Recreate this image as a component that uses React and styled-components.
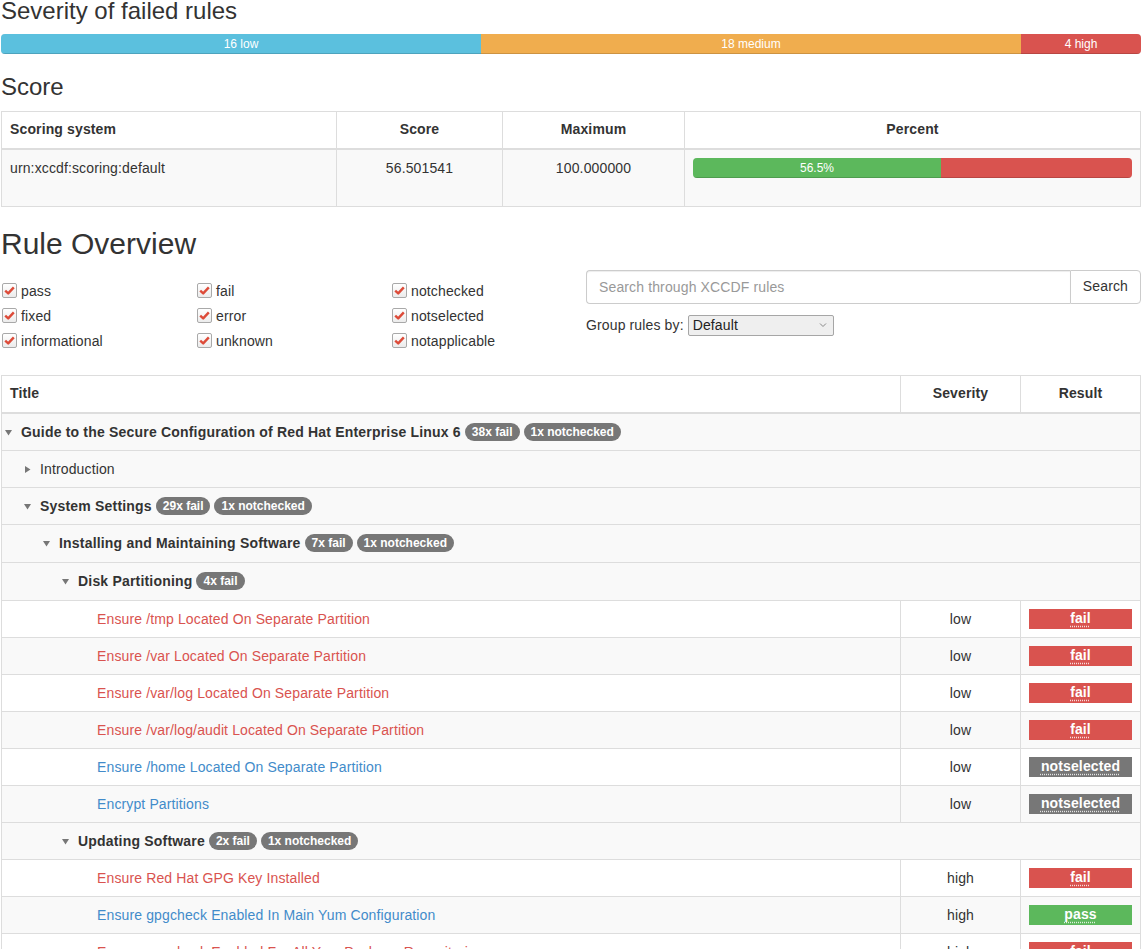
import React from "react";
import styled, { createGlobalStyle } from "styled-components";

const GlobalStyle = createGlobalStyle`
  body {
    margin: 0;
    font-family: "Liberation Sans", Arial, sans-serif;
    font-size: 14px;
    line-height: 1.428571;
    letter-spacing: 0.13px;
    color: #333;
    background: #fff;
  }
`;

const Page = styled.div`
  width: 1140px;
  padding: 0 1px;
`;

const Heading = styled.h3`
  font-size: ${(p) => p.$size}px;
  font-weight: 500;
  line-height: 1.1;
  letter-spacing: 0;
  margin: ${(p) => p.$top}px 0 10px;
`;

const Progress = styled.div`
  display: flex;
  height: 20px;
  margin-bottom: 20px;
  overflow: hidden;
  background: #f5f5f5;
  border-radius: 4px;
  box-shadow: inset 0 1px 2px rgba(0, 0, 0, 0.1);
`;

const Bar = styled.div`
  background: ${(p) => p.$color};
  color: #fff;
  font-size: 12px;
  line-height: 20px;
  letter-spacing: 0;
  text-align: center;
  box-shadow: inset 0 -1px 0 rgba(0, 0, 0, 0.15);
  white-space: nowrap;
`;

const Table = styled.table`
  width: 100%;
  border-collapse: collapse;
  border-spacing: 0;
  border: 1px solid #ddd;
  margin-bottom: 20px;
`;

const Th = styled.th`
  border: 1px solid #ddd;
  border-bottom-width: 2px;
  padding: 7px 8px 9px;
  text-align: ${(p) => p.$align || "left"};
  font-weight: bold;
  line-height: 20px;
  vertical-align: bottom;
`;

const Tr = styled.tr`
  background: ${(p) => (p.$shade ? "#f9f9f9" : "#fff")};
`;

const Td = styled.td`
  border: 1px solid #ddd;
  padding: 8px;
  line-height: 20px;
  vertical-align: top;
  text-align: ${(p) => p.$align || "left"};
`;

const GroupCell = styled(Td)`
  padding-left: ${(p) => 3 + p.$depth * 19}px;
  padding-bottom: ${(p) => 8 + (p.$extra || 0)}px;
  font-weight: ${(p) => (p.$bold ? "bold" : "normal")};
  letter-spacing: ${(p) => (p.$bold ? 0.19 : 0.13)}px;
`;

const RuleCell = styled(Td)`
  padding-left: ${(p) => 19 + p.$depth * 19}px;
`;

const RuleLink = styled.a`
  color: ${(p) => (p.$failed ? "#d9534f" : "#428bca")};
  text-decoration: none;
`;

const ToggleIcon = styled.svg`
  display: inline-block;
  width: 7px;
  height: 7px;
  margin-right: 9px;
  vertical-align: 1px;
  fill: #777;
`;

const Badge = styled.span`
  display: inline-block;
  margin-left: 4px;
  padding: 3px 7px;
  font-size: 12px;
  font-weight: bold;
  line-height: 1;
  letter-spacing: 0;
  color: #fff;
  background: #777;
  border-radius: 10px;
  white-space: nowrap;
  vertical-align: 1px;
`;

const ResultLabel = styled.div`
  background: ${(p) => p.$color};
  color: #fff;
  font-weight: bold;
  font-size: 14px;
  line-height: 14px;
  padding: 2px 0 4px;
  text-align: center;
`;

const ResultText = styled.abbr`
  text-decoration: underline dotted rgba(255, 255, 255, 0.8);
  text-underline-offset: 3px;
  cursor: help;
`;

const FilterRow = styled.div`
  display: grid;
  grid-template-columns: 585px 555px;
  margin-bottom: 15px;
`;

const CheckGrid = styled.div`
  display: grid;
  grid-template-columns: repeat(3, 195px);
  row-gap: 5px;
  padding: 11px 0 9px;
`;

const CheckLabel = styled.label`
  display: flex;
  align-items: center;
  gap: 4px;
  line-height: 20px;
  padding-left: 1px;
`;

const CheckBox = styled.span`
  display: inline-flex;
  align-items: center;
  justify-content: center;
  box-sizing: border-box;
  width: 15px;
  height: 15px;
  border: 1px solid #a9a9a9;
  border-radius: 2px;
  background: linear-gradient(#fff, #ececec);
`;

const SearchColumn = styled.div`
  display: flex;
  flex-direction: column;
  gap: 11px;
`;

const InputGroup = styled.div`
  display: flex;
  height: 34px;
`;

const SearchInput = styled.input`
  flex: 1;
  box-sizing: border-box;
  height: 34px;
  padding: 6px 12px;
  font: inherit;
  letter-spacing: 0.13px;
  color: #555;
  border: 1px solid #ccc;
  border-right: 0;
  border-radius: 4px 0 0 4px;
  box-shadow: inset 0 1px 1px rgba(0, 0, 0, 0.075);
  outline: none;
  &::placeholder {
    color: #999;
  }
`;

const SearchButton = styled.button`
  box-sizing: border-box;
  height: 34px;
  padding: 6px 12px;
  font: inherit;
  letter-spacing: 0.13px;
  color: #333;
  background: #fff;
  border: 1px solid #ccc;
  border-radius: 0 4px 4px 0;
`;

const GroupBy = styled.div`
  display: flex;
  align-items: center;
  gap: 4px;
  line-height: 20px;
`;

const SelectBox = styled.div`
  display: flex;
  align-items: center;
  justify-content: space-between;
  box-sizing: border-box;
  width: 146px;
  height: 21px;
  padding: 0 6px 0 4px;
  border: 1px solid #a6a6a6;
  border-radius: 2px;
  background: #efefef;
  color: #222;
`;

const Chevron = styled.svg`
  width: 8px;
  height: 6px;
  stroke: #888;
  fill: none;
`;

const severity = [
  { label: "16 low", count: 16, color: "#5bc0de" },
  { label: "18 medium", count: 18, color: "#f0ad4e" },
  { label: "4 high", count: 4, color: "#d9534f" },
];

const filters = [
  "pass",
  "fail",
  "notchecked",
  "fixed",
  "error",
  "notselected",
  "informational",
  "unknown",
  "notapplicable",
];

const resultColors = {
  fail: "#d9534f",
  pass: "#5cb85c",
  notselected: "#777",
  notchecked: "#777",
};

const rows = [
  { group: true, depth: 0, open: true, bold: true, title: "Guide to the Secure Configuration of Red Hat Enterprise Linux 6", badges: ["38x fail", "1x notchecked"] },
  { group: true, depth: 1, open: false, bold: false, title: "Introduction", badges: [] },
  { group: true, depth: 1, open: true, bold: true, title: "System Settings", badges: ["29x fail", "1x notchecked"] },
  { group: true, depth: 2, open: true, bold: true, extra: 1, title: "Installing and Maintaining Software", badges: ["7x fail", "1x notchecked"] },
  { group: true, depth: 3, open: true, bold: true, extra: 1, title: "Disk Partitioning", badges: ["4x fail"] },
  { depth: 4, shade: false, title: "Ensure /tmp Located On Separate Partition", severity: "low", result: "fail" },
  { depth: 4, shade: true, title: "Ensure /var Located On Separate Partition", severity: "low", result: "fail" },
  { depth: 4, shade: false, title: "Ensure /var/log Located On Separate Partition", severity: "low", result: "fail" },
  { depth: 4, shade: true, title: "Ensure /var/log/audit Located On Separate Partition", severity: "low", result: "fail" },
  { depth: 4, shade: false, title: "Ensure /home Located On Separate Partition", severity: "low", result: "notselected" },
  { depth: 4, shade: true, title: "Encrypt Partitions", severity: "low", result: "notselected" },
  { group: true, depth: 3, open: true, bold: true, title: "Updating Software", badges: ["2x fail", "1x notchecked"] },
  { depth: 4, shade: false, title: "Ensure Red Hat GPG Key Installed", severity: "high", result: "fail" },
  { depth: 4, shade: true, title: "Ensure gpgcheck Enabled In Main Yum Configuration", severity: "high", result: "pass" },
  { depth: 4, shade: false, title: "Ensure gpgcheck Enabled For All Yum Package Repositories", severity: "high", result: "fail" },
  { depth: 4, shade: true, title: "Ensure Software Patches Installed", severity: "high", result: "notchecked" },
];

const Toggle = ({ open }) => (
  <ToggleIcon viewBox="0 0 7 7">
    {open ? <polygon points="0,1 7,1 3.5,6.5" /> : <polygon points="1,0 6.5,3.5 1,7" />}
  </ToggleIcon>
);

const Check = () => (
  <CheckBox>
    <svg width="11" height="9" viewBox="0 0 11 9">
      <path d="M1.2 4.6 L4.2 7.4 L9.8 1.4" stroke="#dd4b39" strokeWidth="2.4" fill="none" strokeLinejoin="round" />
    </svg>
  </CheckBox>
);

export default function App() {
  const totalFailed = severity.reduce((s, x) => s + x.count, 0);
  const score = 56.501541;

  return (
    <Page>
      <GlobalStyle />
      <Heading $size={24} $top={-2}>Severity of failed rules</Heading>
      <Progress>
        {severity.map((s) => (
          <Bar key={s.label} $color={s.color} style={{ width: `${(s.count / totalFailed) * 100}%` }}>
            {s.label}
          </Bar>
        ))}
      </Progress>

      <Heading $size={24} $top={20}>Score</Heading>
      <Table>
        <thead>
          <tr>
            <Th style={{ width: 318 }}>Scoring system</Th>
            <Th $align="center" style={{ width: 149 }}>Score</Th>
            <Th $align="center" style={{ width: 165 }}>Maximum</Th>
            <Th $align="center">Percent</Th>
          </tr>
        </thead>
        <tbody>
          <Tr $shade>
            <Td>urn:xccdf:scoring:default</Td>
            <Td $align="center">56.501541</Td>
            <Td $align="center">100.000000</Td>
            <Td>
              <Progress>
                <Bar $color="#5cb85c" style={{ width: `${score}%` }}>56.5%</Bar>
                <Bar $color="#d9534f" style={{ width: `${100 - score}%` }} />
              </Progress>
            </Td>
          </Tr>
        </tbody>
      </Table>

      <Heading as="h2" $size={30} $top={20}>Rule Overview</Heading>
      <FilterRow>
        <CheckGrid>
          {filters.map((f) => (
            <CheckLabel key={f}>
              <Check />
              {f}
            </CheckLabel>
          ))}
        </CheckGrid>
        <SearchColumn>
          <InputGroup>
            <SearchInput placeholder="Search through XCCDF rules" />
            <SearchButton>Search</SearchButton>
          </InputGroup>
          <GroupBy>
            Group rules by:
            <SelectBox>
              Default
              <Chevron viewBox="0 0 8 6">
                <path d="M1 1.5 L4 4.5 L7 1.5" strokeWidth="1" />
              </Chevron>
            </SelectBox>
          </GroupBy>
        </SearchColumn>
      </FilterRow>

      <Table>
        <thead>
          <tr>
            <Th>Title</Th>
            <Th $align="center" style={{ width: 103 }}>Severity</Th>
            <Th $align="center" style={{ width: 103 }}>Result</Th>
          </tr>
        </thead>
        <tbody>
          {rows.map((r, i) =>
            r.group ? (
              <Tr key={i} $shade>
                <GroupCell colSpan={3} $depth={r.depth} $bold={r.bold} $extra={r.extra}>
                  <Toggle open={r.open} />
                  {r.title}
                  {r.badges.map((b) => (
                    <Badge key={b}>{b}</Badge>
                  ))}
                </GroupCell>
              </Tr>
            ) : (
              <Tr key={i} $shade={r.shade}>
                <RuleCell $depth={r.depth}>
                  <RuleLink href="#" $failed={r.result === "fail"}>{r.title}</RuleLink>
                </RuleCell>
                <Td $align="center">{r.severity}</Td>
                <Td>
                  <ResultLabel $color={resultColors[r.result]}>
                    <ResultText title={r.result}>{r.result}</ResultText>
                  </ResultLabel>
                </Td>
              </Tr>
            )
          )}
        </tbody>
      </Table>
    </Page>
  );
}
